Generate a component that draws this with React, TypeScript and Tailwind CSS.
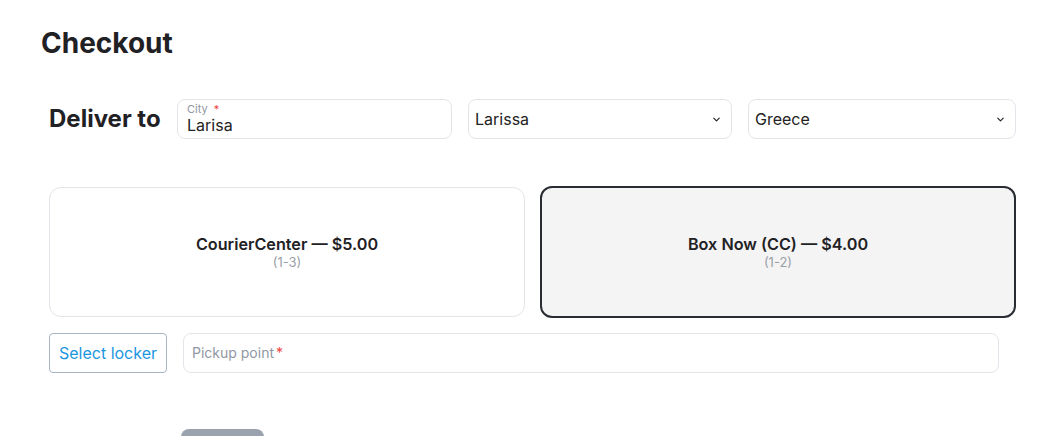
import { ChevronDown } from 'lucide-react';

interface ShippingOption {
    id: string;
    label: string;
    days: string;
    selected: boolean;
}

const options: ShippingOption[] = [
    { id: 'cc', label: 'CourierCenter — $5.00', days: '(1-3)', selected: false },
    { id: 'boxnow', label: 'Box Now (CC) — $4.00', days: '(1-2)', selected: true },
];

function SelectBox({ value, width }: { value: string; width: string }) {
    return (
        <div className={`${width} h-10 flex items-center justify-between rounded-lg border border-[#e2e5ea] bg-white pl-[6px] pr-[9px]`}>
            <span className="text-base text-[#222]">{value}</span>
            <ChevronDown className="h-[11px] w-[11px] text-[#222]" strokeWidth={2.5} />
        </div>
    );
}

export default function App() {
    return (
        <div className="min-h-screen bg-white font-['Inter',sans-serif] text-[#1f2125]">
            <div className="pl-[41px] pt-[26px]">
                <h1 className="text-[28px] font-bold leading-[34px]">Checkout</h1>
            </div>

            <div className="pl-[49px] pr-[37px]">
                {/* address row */}
                <div className="mt-[39px] flex items-center gap-4">
                    <h2 className="text-2xl font-bold leading-8 w-[112px]">Deliver to</h2>
                    <div className="w-[275px] h-10 rounded-lg border border-[#e2e5ea] px-[9px] flex flex-col justify-center">
                        <span className="text-[11px] leading-[11px] text-[#9097a3]">
                            City <span className="ml-[3px] text-[#ef4444]">*</span>
                        </span>
                        <span className="text-base leading-5 text-[#222]">Larisa</span>
                    </div>
                    <SelectBox value="Larissa" width="w-[264px]" />
                    <SelectBox value="Greece" width="w-[268px]" />
                </div>

                {/* shipping options */}
                <div className="mt-[48px] grid grid-cols-2 gap-[15px]">
                    {options.map((o) => (
                        <div
                            key={o.id}
                            className={
                                o.selected
                                    ? 'h-[132px] -mt-px rounded-xl border-2 border-[#2a2c33] bg-[#f4f4f4] flex flex-col items-center justify-center'
                                    : 'h-[130px] rounded-xl border border-[#e2e5ea] bg-white flex flex-col items-center justify-center'
                            }
                        >
                            <span className="text-[16.2px] font-semibold leading-5">{o.label}</span>
                            <span className="text-[13px] leading-4 text-[#9aa0a8]">{o.days}</span>
                        </div>
                    ))}
                </div>

                {/* pickup */}
                <div className="mt-[15px] flex items-center gap-4 pr-[17px]">
                    <button className="h-10 w-[118px] rounded-[4px] border border-[#a7b6c6] text-base text-[#1b96e0]">
                        Select locker
                    </button>
                    <div className="flex-1 h-10 rounded-lg border border-[#e2e5ea] px-2 flex items-center">
                        <span className="text-sm text-[#9097a3]">Pickup point</span>
                        <span className="ml-[2px] text-sm text-[#ef4444]">*</span>
                    </div>
                </div>

                <div className="mt-[56px] pl-[132px]">
                    <div className="h-10 w-[83px] rounded-lg bg-[#9aa3ad]" />
                </div>
            </div>
        </div>
    );
}
